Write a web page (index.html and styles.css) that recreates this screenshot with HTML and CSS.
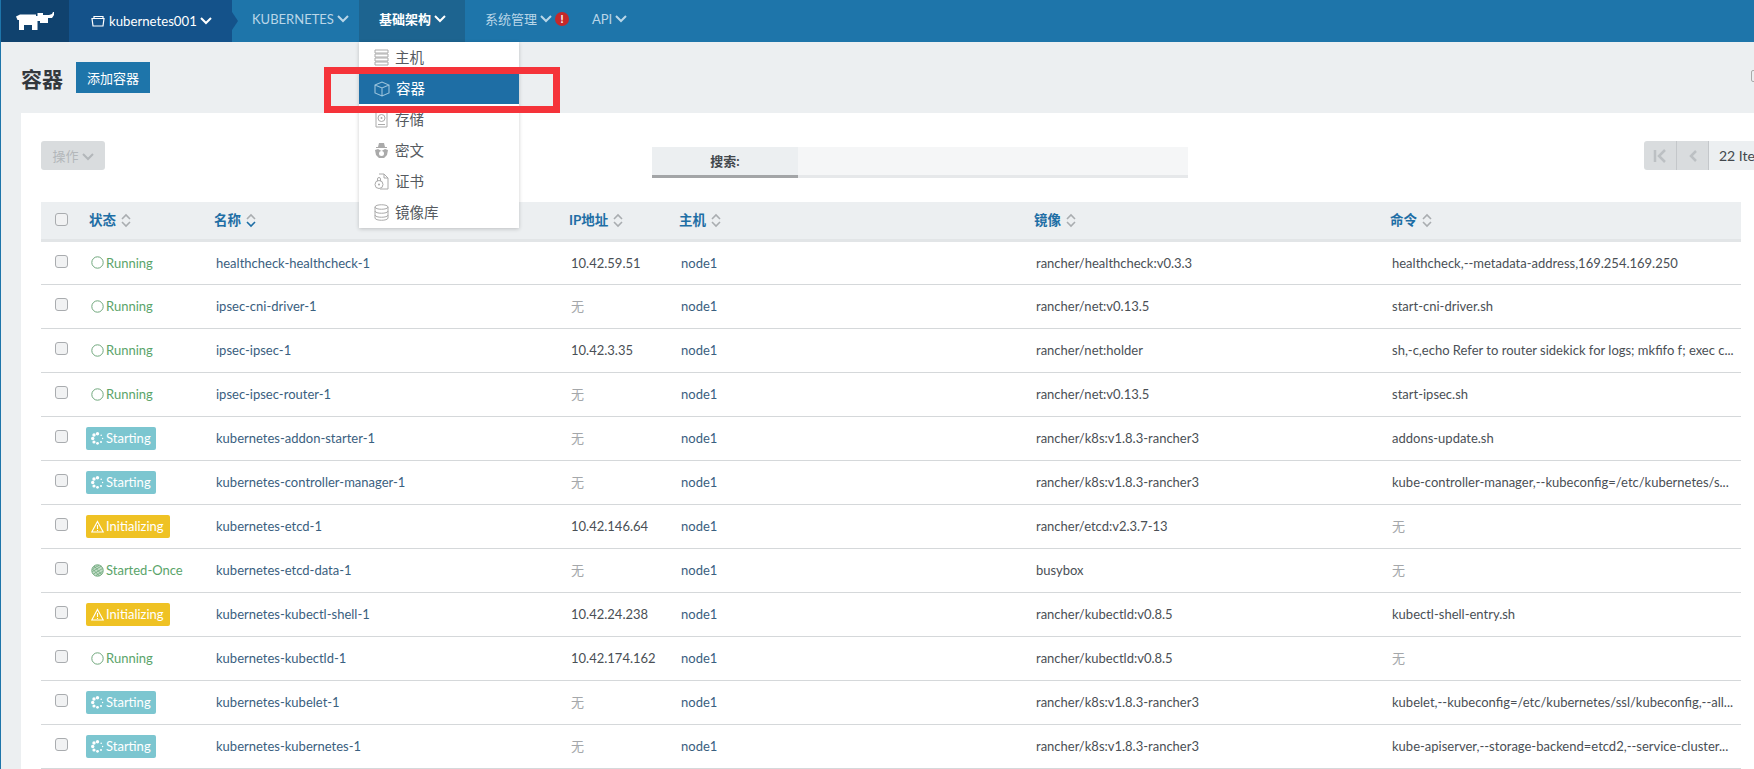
FILE: index.html
```html
<!DOCTYPE html>
<html lang="zh">
<head>
<meta charset="utf-8">
<title>容器</title>
<link rel="stylesheet" href="styles.css">
</head>
<body>
<header class="topbar">
  <a class="logo"><svg width="38" height="18" viewBox="0 0 38 18"><path fill="#fff" d="M0 4.500L4 2.500H20V4H21.500V1H27V3H33L36 2L37 0H38V3L36 6H32V11H24V9H21.500V18H16V13H8V18H3V8H1.500Z"/></svg></a>
  <a class="env"><svg class="env-ico" width="14" height="12" viewBox="0 0 14 12"><path fill="none" stroke="#fff" stroke-width="1.200" d="M1 3.500h12l-1 7.500h-10zM3 3.500v-2h9v2"/></svg>kubernetes001<svg class="chev" width="12" height="8" viewBox="0 0 12 8"><path d="M1 1l5 5 5-5"/></svg></a>
  <nav class="nav">
    <a class="nav-item">KUBERNETES<svg class="chev" width="12" height="8" viewBox="0 0 12 8"><path d="M1 1l5 5 5-5"/></svg></a>
    <a class="nav-item active">基础架构<svg class="chev" width="12" height="8" viewBox="0 0 12 8"><path d="M1 1l5 5 5-5"/></svg></a>
    <a class="nav-item">系统管理<svg class="chev" width="12" height="8" viewBox="0 0 12 8"><path d="M1 1l5 5 5-5"/></svg><span class="alert">!</span></a>
    <a class="nav-item">API<svg class="chev" width="12" height="8" viewBox="0 0 12 8"><path d="M1 1l5 5 5-5"/></svg></a>
  </nav>
</header>

<ul class="menu">
  <li class="menu-item"><svg width="15" height="17" viewBox="0 0 15 17"><path fill="none" stroke="#aaa" d="M1 1h13v3h-13zM1 5h13v3h-13zM1 9h13v3h-13zM1 13h13v3h-13z"/></svg>主机</li>
  <li class="menu-item current"><svg width="16" height="16" viewBox="0 0 16 16"><path fill="none" stroke="#9cc4dc" stroke-width="1.100" d="M1 4l7-3 7 3v8l-7 3-7-3zM1 4l7 3 7-3M8 7v8"/></svg>容器</li>
  <li class="menu-item"><svg width="15" height="17" viewBox="0 0 15 17"><path fill="none" stroke="#aaa" d="M2 1h11v15h-11z"/><circle cx="7.500" cy="7" r="3.500" fill="none" stroke="#aaa"/><circle cx="7.500" cy="7" r="1" fill="#aaa"/><path stroke="#aaa" d="M4 13.500h7"/></svg>存储</li>
  <li class="menu-item"><svg width="15" height="17" viewBox="0 0 15 17"><path fill="#aaa" d="M5 1h5l1 4h2v1h-11v-1h2zM1 8l3-1 3.500 2 3.500-2 3 1-1 5-3 3h-5l-3-3z"/><circle cx="7.500" cy="11.500" r="2.500" fill="#fff"/></svg>密文</li>
  <li class="menu-item"><svg width="15" height="17" viewBox="0 0 15 17"><path fill="none" stroke="#aaa" d="M5 1h5l4 4v11h-8M10 1v4h4"/><circle cx="5" cy="11.500" r="4" fill="#fff" stroke="#aaa"/><path fill="none" stroke="#aaa" d="M3.500 8v-2a1.500 1.500 0 0 1 3 0v2"/><circle cx="5" cy="11.500" r="1" fill="#aaa"/></svg>证书</li>
  <li class="menu-item"><svg width="15" height="17" viewBox="0 0 15 17"><path fill="none" stroke="#aaa" d="M1 3c0-3 13-3 13 0v11c0 3-13 3-13 0zM1 3c0 3 13 3 13 0M1 7c0 3 13 3 13 0M1 11c0 3 13 3 13 0"/></svg>镜像库</li>
</ul>
<div class="callout"></div>

<main class="page">
  <div class="page-head">
    <h1 class="page-title">容器</h1>
    <button class="btn-primary">添加容器</button>
    <span class="head-edge"></span>
  </div>
  <section class="panel">
    <div class="toolbar">
      <button class="btn-action">操作<svg class="chev" width="12" height="8" viewBox="0 0 12 8"><path d="M1 1l5 5 5-5"/></svg></button>
      <div class="search"><label class="search-label">搜索:</label><div class="search-input"></div></div>
      <div class="pager">
        <span class="pg-btn first"><svg width="14" height="14" viewBox="0 0 14 14"><path d="M2 1v12M12 1l-6 6 6 6"/></svg></span>
        <span class="pg-btn"><svg width="14" height="14" viewBox="0 0 14 14"><path d="M10 2l-5 5 5 5"/></svg></span>
        <span class="pg-label">22 Items</span>
      </div>
    </div>
    <table class="grid">
      <colgroup><col class="c-check"><col class="c-state"><col class="c-name"><col class="c-ip"><col class="c-host"><col class="c-image"><col class="c-cmd"></colgroup>
      <thead>
        <tr>
          <th><span class="cb"></span></th>
          <th class="th-state">状态<svg class="sort" width="10" height="15" viewBox="0 0 10 15"><path d="M1 6l4-4 4 4M1 9l4 4 4-4"/></svg></th>
          <th>名称<svg class="sort on" width="10" height="15" viewBox="0 0 10 15"><path d="M1 6l4-4 4 4"/><path class="dn" d="M1 9l4 4 4-4"/></svg></th>
          <th>IP地址<svg class="sort" width="10" height="15" viewBox="0 0 10 15"><path d="M1 6l4-4 4 4M1 9l4 4 4-4"/></svg></th>
          <th>主机<svg class="sort" width="10" height="15" viewBox="0 0 10 15"><path d="M1 6l4-4 4 4M1 9l4 4 4-4"/></svg></th>
          <th>镜像<svg class="sort" width="10" height="15" viewBox="0 0 10 15"><path d="M1 6l4-4 4 4M1 9l4 4 4-4"/></svg></th>
          <th>命令<svg class="sort" width="10" height="15" viewBox="0 0 10 15"><path d="M1 6l4-4 4 4M1 9l4 4 4-4"/></svg></th>
        </tr>
      </thead>
      <tbody id="rows"></tbody>
    </table>
  </section>
</main>
<script src="rows.js"></script>
</body>
</html>
```
FILE: rows.js
```js
var ICONS = {
  run: '<svg class="st-ico" width="13" height="13" viewBox="0 0 13 13"><circle cx="6.500" cy="6.500" r="5.700" fill="none" stroke="#6fa77c"/></svg>',
  start: '<svg class="st-ico" width="13" height="13" viewBox="0 0 13 13" fill="#fff"><circle cx="6.500" cy="1.800" r="1.700"/><circle cx="10.200" cy="3.200" r=".8"/><circle cx="11.600" cy="6.500" r=".7"/><circle cx="10" cy="10" r="1"/><circle cx="6.500" cy="11.300" r="1.400"/><circle cx="3" cy="10" r="1.600"/><circle cx="1.700" cy="6.500" r="1.700"/><circle cx="3" cy="3" r="1.700"/></svg>',
  warn: '<svg class="st-ico" width="13" height="13" viewBox="0 0 13 13"><path fill="none" stroke="#fff" stroke-width="1.100" d="M6.500 1.500l5.700 10.500h-11.400zM6.500 5v4M6.500 10v1"/></svg>',
  once: '<svg class="st-ico" width="13" height="13" viewBox="0 0 13 13"><circle cx="6.500" cy="6.500" r="5.700" fill="#c4dfc9" stroke="#6fa77c"/><path stroke="#6fa77c" stroke-width=".8" d="M2 4.500l6-3M1.500 7.500l9-5.500M2.500 10l9-5.500M5 11.500l6.500-4M3 2l8 9M1.500 5l7 7"/></svg>'
};
var STATES = {
  run: ['state-plain', 'run', 'Running'],
  start: ['state-badge starting', 'start', 'Starting'],
  init: ['state-badge initializing', 'warn', 'Initializing'],
  once: ['state-plain', 'once', 'Started-Once']
};
var NONE = null;
var DATA = [
  ['run', 'healthcheck-healthcheck-1', '10.42.59.51', 'rancher/healthcheck:v0.3.3', 'healthcheck,--metadata-address,169.254.169.250'],
  ['run', 'ipsec-cni-driver-1', NONE, 'rancher/net:v0.13.5', 'start-cni-driver.sh'],
  ['run', 'ipsec-ipsec-1', '10.42.3.35', 'rancher/net:holder', 'sh,-c,echo Refer to router sidekick for logs; mkfifo f; exec c...'],
  ['run', 'ipsec-ipsec-router-1', NONE, 'rancher/net:v0.13.5', 'start-ipsec.sh'],
  ['start', 'kubernetes-addon-starter-1', NONE, 'rancher/k8s:v1.8.3-rancher3', 'addons-update.sh'],
  ['start', 'kubernetes-controller-manager-1', NONE, 'rancher/k8s:v1.8.3-rancher3', 'kube-controller-manager,--kubeconfig=/etc/kubernetes/s...'],
  ['init', 'kubernetes-etcd-1', '10.42.146.64', 'rancher/etcd:v2.3.7-13', NONE],
  ['once', 'kubernetes-etcd-data-1', NONE, 'busybox', NONE],
  ['init', 'kubernetes-kubectl-shell-1', '10.42.24.238', 'rancher/kubectld:v0.8.5', 'kubectl-shell-entry.sh'],
  ['run', 'kubernetes-kubectld-1', '10.42.174.162', 'rancher/kubectld:v0.8.5', NONE],
  ['start', 'kubernetes-kubelet-1', NONE, 'rancher/k8s:v1.8.3-rancher3', 'kubelet,--kubeconfig=/etc/kubernetes/ssl/kubeconfig,--all...'],
  ['start', 'kubernetes-kubernetes-1', NONE, 'rancher/k8s:v1.8.3-rancher3', 'kube-apiserver,--storage-backend=etcd2,--service-cluster...']
];
function val(v) { return v === NONE ? '<span class="none">无</span>' : v; }
document.getElementById('rows').innerHTML = DATA.map(function (r) {
  var s = STATES[r[0]];
  return '<tr><td><span class="cb"></span></td>' +
    '<td><span class="' + s[0] + '">' + ICONS[s[1]] + s[2] + '</span></td>' +
    '<td class="link">' + r[1] + '</td>' +
    '<td>' + val(r[2]) + '</td>' +
    '<td class="link">node1</td>' +
    '<td>' + r[3] + '</td>' +
    '<td>' + val(r[4]) + '</td></tr>';
}).join('');
```
FILE: styles.css
```css
* { box-sizing: border-box; }
html, body { margin: 0; height: 769px; overflow: hidden; }
body {
  background: #eceff1;
  border-left: 1px solid #1e75aa;
  font: 13px/20px Lato, "Noto Sans CJK SC", sans-serif;
  color: #4a4f55;
}
.topbar {
  display: flex;
  height: 42px;
  margin-left: -1px;
  background: #1e75aa;
  color: #fff;
}
.logo {
  width: 69px;
  display: flex;
  align-items: center;
  justify-content: center;
  padding-left: 1px;
  background: #10426e;
}
.env {
  width: 163px;
  display: flex;
  align-items: center;
  padding-left: 22px;
  background: #14528a;
  position: relative;
  font-size: 13.200px;
}
.env::after {
  content: "";
  position: absolute;
  left: 100%;
  top: 12px;
  border-left: 6px solid #14528a;
  border-top: 9px solid transparent;
  border-bottom: 9px solid transparent;
}
.env-ico { margin-right: 4px; }
.chev { margin-left: 3px; fill: none; stroke: currentColor; stroke-width: 2; }
.nav { display: flex; }
.nav-item {
  display: flex;
  align-items: center;
  color: #b9d6e8;
  font-size: 13px;
  height: 38px;
  width: 107px;
  margin-left: 20px;
}
.nav-item.active {
  width: 106px;
  margin-left: 0;
  padding: 0 0 4px 20px;
  height: 42px;
  background: #1d6490;
  color: #fff;
  font-weight: 700;
}
.nav-item:last-child { margin-left: 0; }
.alert {
  width: 14px;
  height: 14px;
  margin-left: 3px;
  border-radius: 50%;
  background: #c5282a;
  color: #fff;
  font: 700 11px/14px Lato, sans-serif;
  text-align: center;
}
.menu {
  position: absolute;
  left: 359px;
  top: 42px;
  width: 160px;
  height: 186px;
  margin: 0;
  padding: 0;
  list-style: none;
  background: #fff;
  box-shadow: 0 1px 4px rgba(0, 0, 0, .2);
  z-index: 3;
}
.menu-item {
  height: 31px;
  display: flex;
  align-items: center;
  gap: 6px;
  padding-left: 15px;
  color: #555a60;
  font-size: 14.500px;
}
.menu-item.current { background: #1e6ea5; color: #fff; }
.callout {
  position: absolute;
  left: 324px;
  top: 67px;
  width: 236px;
  height: 46px;
  border: 7px solid #f5333a;
  z-index: 4;
}
.page { padding: 0 0 0 20px; }
.page-head {
  height: 71px;
  display: flex;
  align-items: flex-start;
  padding-top: 20px;
  position: relative;
}
.page-title {
  margin: 4px 13px 0 0;
  font-size: 21px;
  line-height: 26px;
  font-weight: 700;
  color: #33383d;
}
.btn-primary {
  width: 74px;
  height: 31px;
  border: 0;
  padding: 0;
  background: #1e75aa;
  color: #fff;
  font: 13px Lato, "Noto Sans CJK SC", sans-serif;
}
.head-edge {
  position: absolute;
  right: -5px;
  top: 28px;
  width: 8px;
  height: 12px;
  border: 1px solid #aaa;
  border-radius: 2px;
}
.panel { background: #fff; height: 656px; padding-left: 20px; width: 1900px; }
.toolbar { height: 89px; padding-top: 28px; display: flex; align-items: flex-start; }
.btn-action {
  width: 64px;
  height: 29px;
  border: 0;
  border-radius: 3px;
  background: #d9dcde;
  color: #b3b7ba;
  font: 13px Lato, "Noto Sans CJK SC", sans-serif;
  padding: 0;
}
.btn-action .chev { stroke: #b3b7ba; }
.search { display: flex; width: 536px; height: 31px; margin: 6px 0 0 547px; }
.search-label {
  width: 146px;
  background: #eceff1;
  border-bottom: 3px solid #a3a5a7;
  text-align: center;
  line-height: 28px;
  font-weight: 700;
  color: #43484d;
}
.search-input { flex: 1; background: #f5f6f7; border-bottom: 3px solid #e6e8ea; }
.pager { display: flex; height: 29px; margin-left: 456px; font-size: 14px; }
.pg-btn {
  width: 32px;
  display: flex;
  align-items: center;
  justify-content: center;
  background: #d9dcde;
  border-right: 1px solid #c4c7ca;
}
.pg-btn.first { width: 33px; border-radius: 3px 0 0 3px; }
.pg-btn svg { fill: none; stroke: #bcc0c3; stroke-width: 2.500; }
.pg-label { background: #eceff1; padding: 0 10px; line-height: 29px; color: #43484d; width: 100px; white-space: nowrap; }
.grid { border-collapse: collapse; table-layout: fixed; width: 1700px; }
.c-check { width: 45px; }
.c-state { width: 126px; }
.c-name { width: 355px; }
.c-ip { width: 110px; }
.c-host { width: 355px; }
.c-image { width: 356px; }
.c-cmd { width: 353px; }
.grid th {
  height: 38px;
  padding: 0 0 0 2px;
  background: #eceff1;
  border-bottom: 3px solid #e2e5e7;
  color: #1e6ea5;
  font-size: 13.500px;
  font-weight: 700;
  text-align: left;
}
.grid th:first-child, .grid td:first-child { padding: 0 0 0 14px; }
.grid th.th-state { padding-left: 3px; }
.grid th .cb { margin-top: -1px; }
.grid td {
  height: 44px;
  padding: 0 0 0 4px;
  border-bottom: 1px solid #d5d8da;
  white-space: nowrap;
  color: #4a4f55;
}
.grid td:nth-child(2) { padding-left: 0; }
.grid td.link { color: #3a6080; }
.none { color: #a4a7aa; }
.cb {
  display: block;
  width: 13px;
  height: 13px;
  margin-top: -3px;
  background: #f1f2f3;
  border: 1px solid #a9acaf;
  border-radius: 3px;
}
.sort { margin-left: 5px; vertical-align: -3px; fill: none; stroke: #a9adb0; stroke-width: 1.600; }
.sort.on .dn { stroke: #1e6ea5; }
.state-plain, .state-badge {
  display: inline-flex;
  align-items: center;
  height: 23px;
  padding: 0 5px;
  gap: 2px;
  white-space: nowrap;
}
.state-plain { color: #5aa46a; }
.state-badge { color: #fff; border-radius: 2px; }
.starting { background: #7cc6d0; width: 70px; }
.initializing { background: #efc224; width: 84px; }
.st-ico { flex: none; }
```
